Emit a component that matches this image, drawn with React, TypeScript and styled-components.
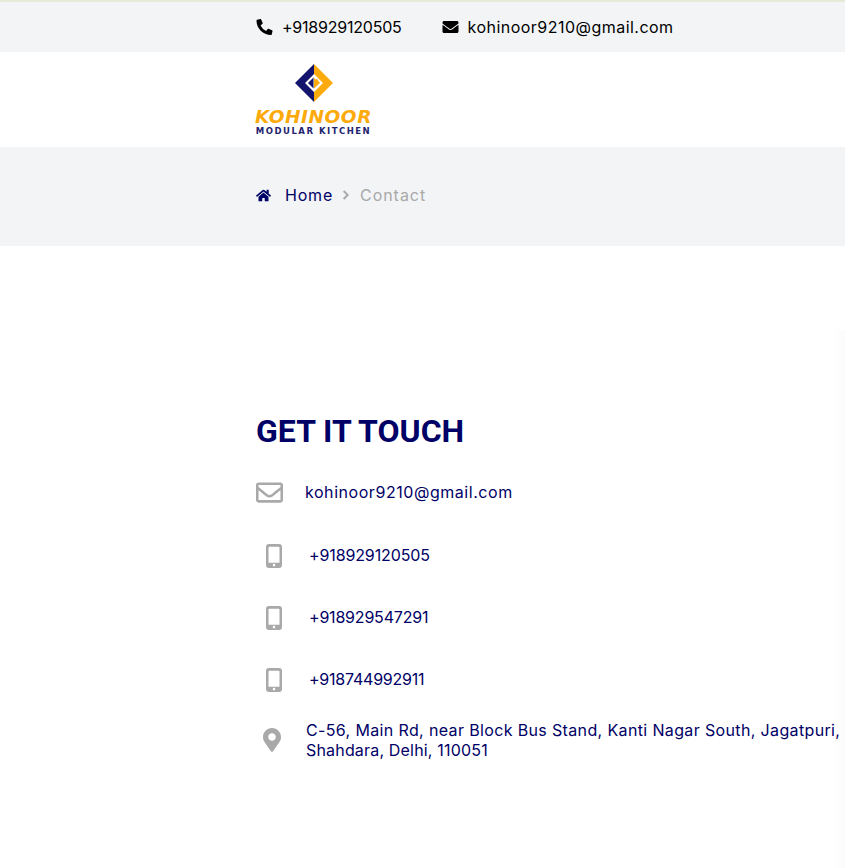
import React from "react";
import styled, { createGlobalStyle } from "styled-components";
import { FaEnvelope, FaHome, FaMapMarkerAlt, FaPhoneAlt, FaRegEnvelope, FaChevronRight } from "react-icons/fa";

const NAVY = "#000066";
const GREY = "#a9a9a9";
const PANEL = "#f2f4f6";
const BODY_FONT = `"Inter", "Liberation Sans", sans-serif`;

const phones = [
	{ number: "+918929120505", spacing: -0.12 },
	{ number: "+918929547291", spacing: -0.2 },
	{ number: "+918744992911", spacing: -0.22 },
];

function MobileIcon() {
	return (
		<svg width="16" height="24" viewBox="0 0 16 24">
			<path
				fill={GREY}
				fillRule="evenodd"
				d="M3 0h10a3 3 0 0 1 3 3v18a3 3 0 0 1-3 3H3a3 3 0 0 1-3-3V3a3 3 0 0 1 3-3zM2.500 3.800V18.800h11V3.800a1 1 0 0 0-1-1h-9a1 1 0 0 0-1 1zM8 19.800a1.300 1.300 0 1 0 0 2.600 1.300 1.300 0 0 0 0-2.600z"
			/>
		</svg>
	);
}

function Logo() {
	return (
		<LogoWrap>
			<svg width="40" height="40" viewBox="0 0 40 40">
				<path fill="#14146e" d="M20 1 1 20l19 19V29L11 20l9-9z" />
				<path fill="#fdaa0c" d="M20 1l19 19-19 19V29l9-9-9-9z" />
				<path fill="#14146e" d="M19.500 14.500 14 20l5.500 5.500z" />
				<path fill="#fdaa0c" d="M20 14.500l1.500 2 1.500-.5 3 4-6 5.500z" />
			</svg>
			<LogoName>KOHINOOR</LogoName>
			<LogoTag>MODULAR KITCHEN</LogoTag>
		</LogoWrap>
	);
}

export default function App() {
	return (
		<>
			<GlobalStyle />
			<Page>
				<TopBar>
					<Inner>
						<TopItems>
							<TopItem>
								<FaPhoneAlt size={16} />
								<Spaced $spacing={-0.22}>+918929120505</Spaced>
							</TopItem>
							<TopItem>
								<FaEnvelope size={16} />
								<Spaced $spacing={0.47}>kohinoor9210@gmail.com</Spaced>
							</TopItem>
						</TopItems>
					</Inner>
				</TopBar>
				<Header>
					<Inner>
						<Logo />
					</Inner>
				</Header>
				<Breadcrumb>
					<Inner>
						<Crumbs>
							<FaHome size={15} color={NAVY} />
							<CrumbLink href="#">Home</CrumbLink>
							<FaChevronRight size={10} color={GREY} />
							<CrumbCurrent>Contact</CrumbCurrent>
						</Crumbs>
					</Inner>
				</Breadcrumb>
				<Contact>
					<Inner>
						<Heading>GET IT TOUCH</Heading>
						<EmailRow>
							<FaRegEnvelope size={27} color={GREY} />
							<ContactText href="#" $spacing={0.55}>
								kohinoor9210@gmail.com
							</ContactText>
						</EmailRow>
						{phones.map((p) => (
							<PhoneRow key={p.number}>
								<PhoneIcon>
									<MobileIcon />
								</PhoneIcon>
								<ContactText href="#" $spacing={p.spacing}>
									{p.number}
								</ContactText>
							</PhoneRow>
						))}
						<AddressRow>
							<PinIcon>
								<FaMapMarkerAlt size={24} color={GREY} />
							</PinIcon>
							<AddressText>
								<Spaced $spacing={0.36}>C-56, Main Rd, near Block Bus Stand, Kanti Nagar South, Jagatpuri,</Spaced>
								<br />
								<Spaced $spacing={0.18}>Shahdara, Delhi, 110051</Spaced>
							</AddressText>
						</AddressRow>
					</Inner>
				</Contact>
				<EdgeShade />
			</Page>
		</>
	);
}

const GlobalStyle = createGlobalStyle`
	html, body {
		margin: 0;
		padding: 0;
		background: #fff;
		overflow: hidden;
	}
	* {
		box-sizing: border-box;
	}
`;

const Page = styled.div`
	position: relative;
	width: 845px;
	height: 868px;
	overflow: hidden;
	font-family: ${BODY_FONT};
	font-size: 16px;
`;

const Inner = styled.div`
	padding-left: 256px;
`;

const TopBar = styled.div`
	height: 52px;
	background: ${PANEL};
	border-top: 2px solid #e6ead9;
	display: flex;
	align-items: center;
`;

const TopItems = styled.div`
	display: flex;
	gap: 40px;
`;

const TopItem = styled.div`
	display: flex;
	align-items: center;
	gap: 9px;
	color: #000;
	line-height: 24px;
	white-space: nowrap;

	svg {
		width: 17px;
	}
`;

const Spaced = styled.span<{ $spacing: number }>`
	letter-spacing: ${(p) => p.$spacing}px;
`;

const Header = styled.div`
	height: 95px;
	display: flex;
	align-items: center;
	background: #fff;
`;

const LogoWrap = styled.div`
	width: 115px;
	display: flex;
	flex-direction: column;
	align-items: center;
`;

const LogoName = styled.div`
	margin-top: 4px;
	font-family: "DejaVu Sans", sans-serif;
	font-size: 18.5px;
	line-height: 19px;
	font-weight: 700;
	font-style: italic;
	letter-spacing: 0.55px;
	color: #fdaa0c;
	white-space: nowrap;
`;

const LogoTag = styled.div`
	font-family: "DejaVu Sans", sans-serif;
	font-size: 8.5px;
	line-height: 10px;
	font-weight: 700;
	letter-spacing: 1.5px;
	color: #23236e;
	white-space: nowrap;
`;

const Breadcrumb = styled.div`
	height: 99px;
	background: ${PANEL};
	display: flex;
	align-items: center;
	padding-bottom: 3px;
`;

const Crumbs = styled.div`
	display: flex;
	align-items: center;
	line-height: 24px;

	svg:last-of-type {
		stroke: ${GREY};
		stroke-width: 30px;
	}
`;

const CrumbLink = styled.a`
	margin: 0 8px 0 14px;
	color: ${NAVY};
	text-decoration: none;
	letter-spacing: 0.8px;
`;

const CrumbCurrent = styled.span`
	margin-left: 9px;
	color: ${GREY};
	letter-spacing: 0.95px;
`;

const Contact = styled.div`
	padding-top: 166px;
`;

const Heading = styled.h2`
	margin: 0 0 30px;
	font-family: Roboto, sans-serif;
	font-size: 32px;
	line-height: 38px;
	font-weight: 700;
	color: ${NAVY};
`;

const EmailRow = styled.div`
	display: flex;
	align-items: center;
	gap: 22px;
	height: 24px;
	margin-bottom: 20px;
`;

const PhoneRow = styled.div`
	display: flex;
	align-items: center;
	height: 62px;
`;

const PhoneIcon = styled.div`
	width: 53px;
	padding: 2px 0 0 10px;
	display: flex;
`;

const ContactText = styled.a<{ $spacing: number }>`
	color: ${NAVY};
	text-decoration: none;
	white-space: nowrap;
	letter-spacing: ${(p) => p.$spacing}px;
`;

const AddressRow = styled.div`
	display: flex;
	align-items: center;
	margin-top: 10px;
`;

const PinIcon = styled.div`
	width: 50px;
	padding-left: 4px;
	display: flex;
`;

const AddressText = styled.div`
	color: ${NAVY};
	line-height: 20px;
	white-space: nowrap;
`;

const EdgeShade = styled.div`
	position: absolute;
	top: 330px;
	right: 0;
	bottom: 0;
	width: 12px;
	background: linear-gradient(to right, rgba(0, 0, 0, 0), rgba(0, 0, 0, 0.015));
	pointer-events: none;
`;
